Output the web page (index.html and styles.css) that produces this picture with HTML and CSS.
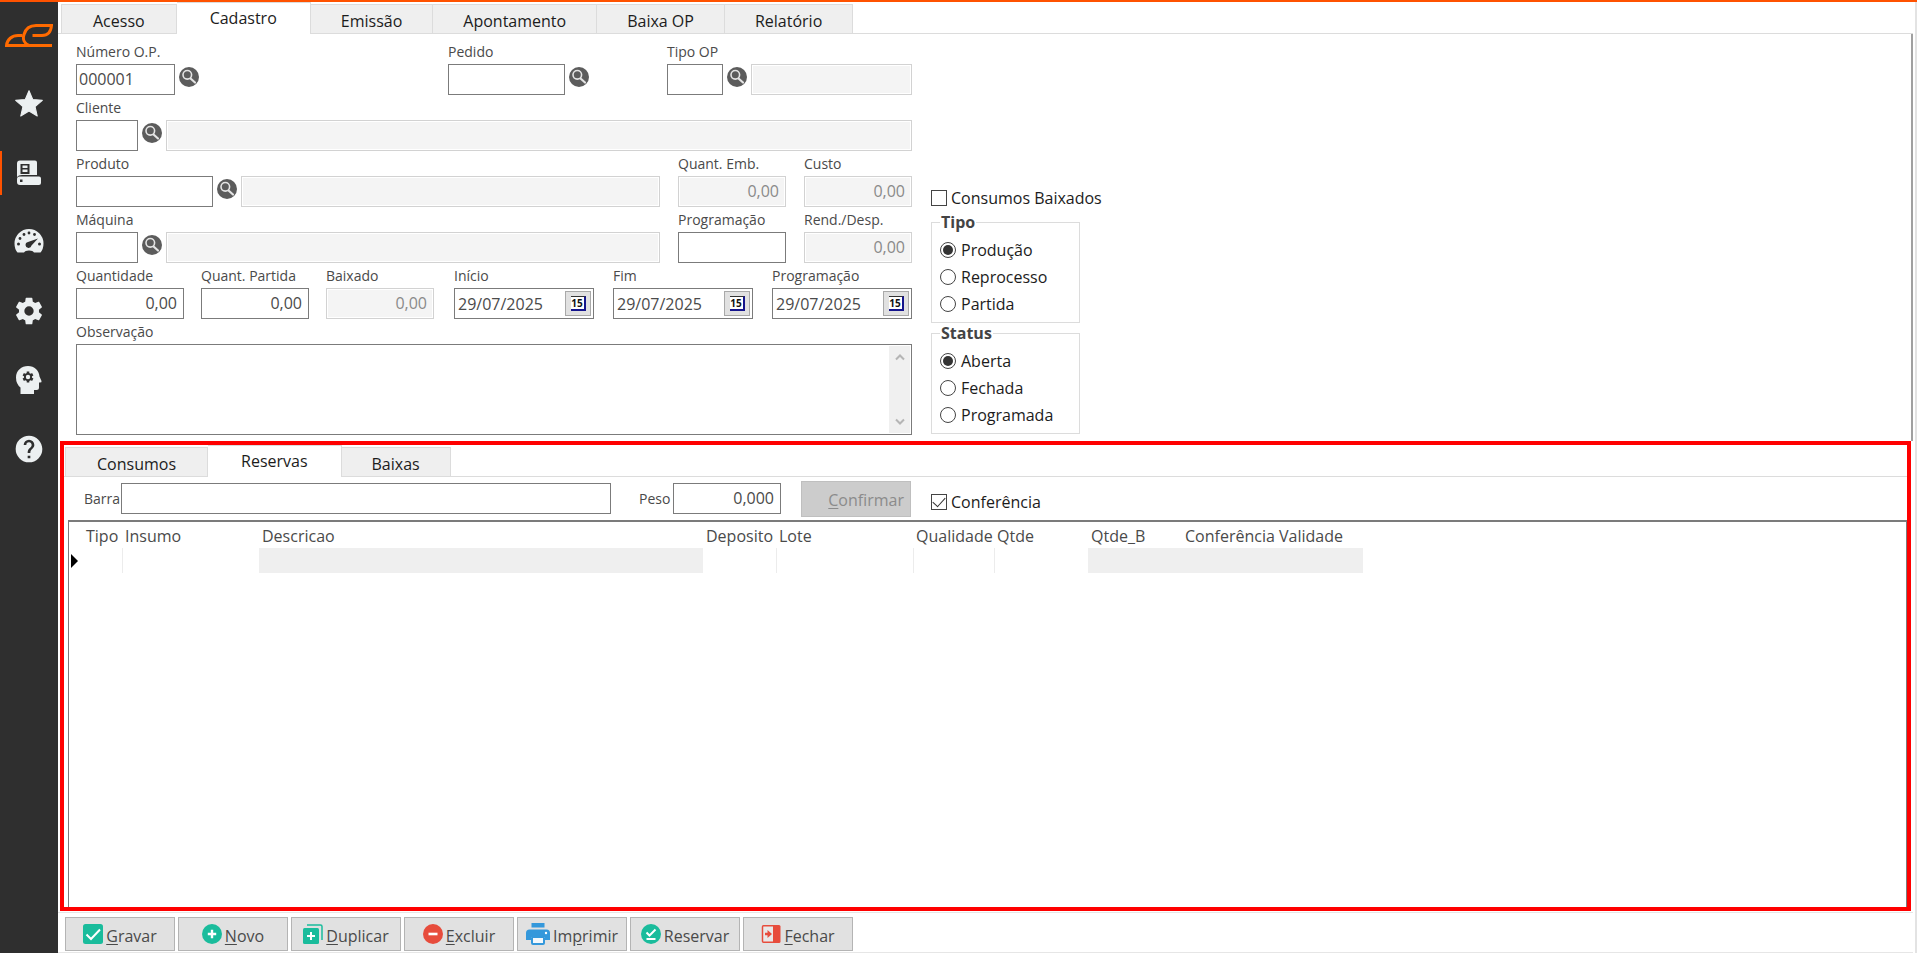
FILE: index.html
```html
<!DOCTYPE html>
<html lang="pt-BR">
<head>
<meta charset="utf-8">
<title>Ordem de Produção</title>
<link rel="stylesheet" href="styles.css">
</head>
<body>
<svg class="defs" aria-hidden="true">
  <symbol id="lens" viewBox="0 0 20 20">
    <circle cx="10" cy="10" r="10" fill="#5c5c5c"/>
    <path d="M11 11l5 4.500" stroke="#e4e4e4" stroke-width="2.2" stroke-linecap="round"/>
    <circle cx="8.300" cy="7.800" r="4.300" fill="#5c5c5c" stroke="#e4e4e4" stroke-width="1.600"/>
  </symbol>
</svg>

<nav class="sidebar" aria-label="Menu principal">
  <svg class="logo" viewBox="0 0 48 23" fill="none" stroke="#ff6a00" stroke-width="3">
    <path d="M47 21.500H1.500C2 15.500 7 11.500 13 11.500H17.500"/>
    <path d="M24 21.500C19 19.500 17.500 15 19 10.500C20.500 5 25 1.500 31 1.500H46.500C46 7.500 43 11.500 37 11.500H27.500"/>
  </svg>
  <button class="nav-item" aria-label="Favoritos"><svg viewBox="0 0 24 24"><path stroke="#ecf0f1" stroke-width=".8" stroke-linejoin="round" d="M12,17.27L18.18,21L16.54,13.97L22,9.24L14.81,8.62L12,2L9.19,8.62L2,9.24L7.45,13.97L5.82,21L12,17.27Z"/></svg></button>
  <button class="nav-item active" aria-label="Cadastros"><svg viewBox="0 0 32 32"><path fill-rule="evenodd" d="M7 3.500H22Q24 3.500 24 5.500V18H9Q5.500 18 4 20V6.500Q4 3.500 7 3.500ZM7.500 7V17H16.500V7ZM9.500 8.500H14.500V11H9.500ZM9.500 12.500H14.500V15H9.500Z"/><path fill-rule="evenodd" d="M6.500 19.500H26Q28 19.500 28 21.500V26Q28 28 26 28H7Q4 28 4 25V22Q4 19.500 6.500 19.500ZM7 22.500V25H9.500V22.500Z"/></svg></button>
  <button class="nav-item" aria-label="Indicadores"><svg viewBox="0 0 32 32"><path d="M4.500 26.500Q1.500 23 1.500 17.500A14.500 14.500 0 0 1 30.500 17.500Q30.500 23 27.500 26.500H21Q20 24.500 16 24.500T11 26.500Z"/><g fill="#2f2f2f"><circle cx="5.500" cy="18" r="1.500"/><circle cx="7" cy="12.500" r="1.400"/><circle cx="11" cy="8.500" r="1.400"/><circle cx="16" cy="7" r="1.400"/><circle cx="21.500" cy="8.500" r="1.400"/><circle cx="26.500" cy="18" r="1.500"/><path d="M25 12.500L18.500 19.500A3 3 0 1 1 15 16Z"/></g></svg></button>
  <button class="nav-item" aria-label="Configurações"><svg viewBox="0 0 24 24"><path d="M12,15.5A3.5,3.5 0 0,1 8.5,12A3.5,3.5 0 0,1 12,8.5A3.5,3.5 0 0,1 15.5,12A3.5,3.5 0 0,1 12,15.5M19.43,12.97C19.47,12.65 19.5,12.33 19.5,12C19.5,11.67 19.47,11.34 19.43,11L21.54,9.37C21.73,9.22 21.78,8.95 21.66,8.73L19.66,5.27C19.54,5.05 19.27,4.96 19.05,5.05L16.56,6.05C16.04,5.66 15.5,5.32 14.87,5.07L14.5,2.42C14.46,2.18 14.25,2 14,2H10C9.75,2 9.54,2.18 9.5,2.42L9.13,5.07C8.5,5.32 7.96,5.66 7.44,6.05L4.95,5.05C4.73,4.96 4.46,5.05 4.34,5.27L2.34,8.73C2.21,8.95 2.27,9.22 2.46,9.37L4.57,11C4.53,11.34 4.5,11.67 4.5,12C4.5,12.33 4.53,12.65 4.57,12.97L2.46,14.63C2.27,14.78 2.21,15.05 2.34,15.27L4.34,18.73C4.46,18.95 4.73,19.03 4.95,18.95L7.44,17.94C7.96,18.34 8.5,18.68 9.13,18.93L9.5,21.58C9.54,21.82 9.75,22 10,22H14C14.25,22 14.46,21.82 14.5,21.58L14.87,18.93C15.5,18.67 16.04,18.34 16.56,17.94L19.05,18.95C19.27,19.03 19.54,18.95 19.66,18.73L21.66,15.27C21.78,15.05 21.73,14.78 21.54,14.63L19.43,12.97Z"/></svg></button>
  <button class="nav-item" aria-label="Inteligência"><svg viewBox="0 0 32 32"><path d="M7.500 30V23.500Q3 20 3 13.500C3 6.500 8.500 2 15 2C21.500 2 26 6.500 26.500 12.500L28.500 17Q29 18.500 27 18.500H26V23.500Q26 26 23.500 26H21V30Z"/><g fill="#2f2f2f"><circle cx="15" cy="13" r="4"/><path d="M13.700 7.500H16.300V18.500H13.700ZM9.600 11.400L10.900 9.100L20.400 14.600L19.100 16.900ZM19.100 9.100L20.400 11.400L10.900 16.900L9.600 14.600Z"/></g><circle cx="15" cy="13" r="2.200"/></svg></button>
  <button class="nav-item" aria-label="Ajuda"><svg viewBox="0 0 24 24"><path d="M15.07,11.25L14.17,12.17C13.45,12.89 13,13.5 13,15H11V14.5C11,13.39 11.45,12.39 12.17,11.67L13.41,10.41C13.78,10.05 14,9.55 14,9C14,7.89 13.1,7 12,7A2,2 0 0,0 10,9H8A4,4 0 0,1 12,5A4,4 0 0,1 16,9C16,9.88 15.64,10.67 15.07,11.25M13,19H11V17H13M12,2A10,10 0 0,0 2,12A10,10 0 0,0 12,22A10,10 0 0,0 22,12C22,6.47 17.5,2 12,2Z"/></svg></button>
</nav>

<main class="main">
  <div class="tabs" role="tablist">
    <button class="tab" role="tab">Acesso</button>
    <button class="tab active" role="tab" aria-selected="true">Cadastro</button>
    <button class="tab" role="tab">Emissão</button>
    <button class="tab" role="tab">Apontamento</button>
    <button class="tab" role="tab">Baixa OP</button>
    <button class="tab" role="tab">Relatório</button>
  </div>

  <section class="order">
    <form class="form">
      <div class="row">
        <div class="field w-code"><label for="numero">Número O.P.</label>
          <div class="control"><input id="numero" value="000001"><button type="button" class="search" aria-label="Buscar O.P."><svg><use href="#lens"/></svg></button></div></div>
        <div class="field w-order push"><label for="pedido">Pedido</label>
          <div class="control"><input id="pedido"><button type="button" class="search" aria-label="Buscar pedido"><svg><use href="#lens"/></svg></button></div></div>
        <div class="field w-type"><label for="tipoop">Tipo OP</label>
          <div class="control"><input id="tipoop" class="in-type"><button type="button" class="search" aria-label="Buscar tipo"><svg><use href="#lens"/></svg></button><input class="grow" aria-label="Descrição do tipo" disabled></div></div>
      </div>
      <div class="row">
        <div class="field grow"><label for="cliente">Cliente</label>
          <div class="control"><input id="cliente" class="in-short"><button type="button" class="search" aria-label="Buscar cliente"><svg><use href="#lens"/></svg></button><input class="grow" aria-label="Nome do cliente" disabled></div></div>
      </div>
      <div class="row">
        <div class="field grow"><label for="produto">Produto</label>
          <div class="control"><input id="produto" class="in-product"><button type="button" class="search" aria-label="Buscar produto"><svg><use href="#lens"/></svg></button><input class="grow" aria-label="Nome do produto" disabled></div></div>
        <div class="field w-num"><label for="emb">Quant. Emb.</label><input id="emb" class="num" value="0,00" disabled></div>
        <div class="field w-num"><label for="custo">Custo</label><input id="custo" class="num" value="0,00" disabled></div>
      </div>
      <div class="row">
        <div class="field grow"><label for="maquina">Máquina</label>
          <div class="control"><input id="maquina" class="in-short"><button type="button" class="search" aria-label="Buscar máquina"><svg><use href="#lens"/></svg></button><input class="grow" aria-label="Nome da máquina" disabled></div></div>
        <div class="field w-num"><label for="prog">Programação</label><input id="prog"></div>
        <div class="field w-num"><label for="rend">Rend./Desp.</label><input id="rend" class="num" value="0,00" disabled></div>
      </div>
      <div class="row">
        <div class="amounts">
          <div class="field w-num"><label for="quant">Quantidade</label><input id="quant" class="num" value="0,00"></div>
          <div class="field w-num"><label for="partida">Quant. Partida</label><input id="partida" class="num" value="0,00"></div>
          <div class="field w-num"><label for="baixado">Baixado</label><input id="baixado" class="num" value="0,00" disabled></div>
        </div>
        <div class="dates">
          <div class="field w-date"><label for="inicio">Início</label>
            <div class="date"><input id="inicio" value="29/07/2025"><button type="button" aria-label="Calendário de início"><span class="cal">15</span></button></div></div>
          <div class="field w-date"><label for="fim">Fim</label>
            <div class="date"><input id="fim" value="29/07/2025"><button type="button" aria-label="Calendário de fim"><span class="cal">15</span></button></div></div>
          <div class="field w-date"><label for="progdata">Programação</label>
            <div class="date"><input id="progdata" value="29/07/2025"><button type="button" aria-label="Calendário de programação"><span class="cal">15</span></button></div></div>
        </div>
      </div>
      <div class="field"><label for="obs">Observação</label>
        <div class="memo"><textarea id="obs"></textarea>
          <div class="scroll" aria-hidden="true">
            <svg viewBox="0 0 10 8"><path d="M1 6.500L5 2.500L9 6.500"/></svg>
            <svg viewBox="0 0 10 8"><path d="M1 1.500L5 5.500L9 1.500"/></svg>
          </div></div></div>
    </form>

    <div class="options">
      <label class="check"><input type="checkbox"><span>Consumos Baixados</span></label>
      <div class="groups">
        <fieldset>
          <legend>Tipo</legend>
          <label class="check"><input type="radio" name="tipo" checked><span>Produção</span></label>
          <label class="check"><input type="radio" name="tipo"><span>Reprocesso</span></label>
          <label class="check"><input type="radio" name="tipo"><span>Partida</span></label>
        </fieldset>
        <fieldset>
          <legend>Status</legend>
          <label class="check"><input type="radio" name="status" checked><span>Aberta</span></label>
          <label class="check"><input type="radio" name="status"><span>Fechada</span></label>
          <label class="check"><input type="radio" name="status"><span>Programada</span></label>
        </fieldset>
      </div>
    </div>
  </section>

  <section class="reserves">
    <div class="tabs" role="tablist">
      <button class="tab" role="tab">Consumos</button>
      <button class="tab active" role="tab" aria-selected="true">Reservas</button>
      <button class="tab" role="tab">Baixas</button>
    </div>
    <div class="entry">
      <label for="barra" class="bar">Barra</label><input id="barra" class="in-bar">
      <label for="peso" class="weight">Peso</label><input id="peso" class="num in-weight" value="0,000">
      <button class="confirm" disabled><u>C</u>onfirmar</button>
      <label class="check"><input type="checkbox" checked><span>Conferência</span></label>
    </div>
    <div class="grid">
      <table>
        <colgroup><col class="c-mark"><col class="c-tipo"><col class="c-insumo"><col class="c-desc"><col class="c-dep"><col class="c-lote"><col class="c-qual"><col class="c-qtde"><col class="c-qtdeb"><col class="c-conf"><col class="c-val"></colgroup>
        <thead><tr><th></th><th>Tipo</th><th>Insumo</th><th>Descricao</th><th>Deposito</th><th>Lote</th><th>Qualidade</th><th>Qtde</th><th>Qtde_B</th><th>Conferência</th><th>Validade</th></tr></thead>
        <tbody><tr><td class="mark"><svg viewBox="0 0 7 14"><path d="M0 0L7 7L0 14Z"/></svg></td><td class="line"></td><td></td><td class="ro"></td><td class="line"></td><td class="line"></td><td class="line"></td><td></td><td class="ro"></td><td class="ro"></td><td class="ro"></td></tr></tbody>
      </table>
    </div>
  </section>

  <footer class="actions">
    <button><svg viewBox="0 0 20 20"><rect width="20" height="20" rx="2.500" fill="#1abc9c"/><path d="M3.500 10.500L8 15L17 5.500" fill="none" stroke="#fff" stroke-width="2"/></svg><span><u>G</u>ravar</span></button>
    <button><svg viewBox="0 0 20 20"><circle cx="10" cy="10" r="10" fill="#1abc9c"/><path d="M10 5.800V14.200M5.800 10H14.200" stroke="#fff" stroke-width="2.400"/></svg><span><u>N</u>ovo</span></button>
    <button><svg viewBox="0 0 20 20"><rect y="4" width="16" height="16" rx="1.500" fill="#1abc9c"/><path d="M4 1H17.500Q19 1 19 2.500V16" fill="none" stroke="#1abc9c" stroke-width="1.500"/><path d="M8 8V16M4 12H12" stroke="#fff" stroke-width="2"/></svg><span><u>D</u>uplicar</span></button>
    <button><svg viewBox="0 0 20 20"><circle cx="10" cy="10" r="10" fill="#e74c3c"/><path d="M5.500 10H14.500" stroke="#fff" stroke-width="2.600"/></svg><span><u>E</u>xcluir</span></button>
    <button><svg class="wide" viewBox="0 0 24 22"><path fill="#3498db" d="M5.500 0H18.500V4.500H5.500ZM3.500 6.500H20.500Q24 6.500 24 10V17H19V14H5V17H0V10Q0 6.500 3.500 6.500Z"/><circle cx="20" cy="10" r="1.200" fill="#fff"/><rect x="6" y="14" width="12" height="7" rx="1" fill="#f3f8fc" stroke="#3498db" stroke-width="2"/></svg><span>Im<u>p</u>rimir</span></button>
    <button><svg viewBox="0 0 20 20"><circle cx="10" cy="10" r="10" fill="#1abc9c"/><path d="M5.500 8.500L8.500 11.500L14.500 5.500M5.500 15H14.500" fill="none" stroke="#fff" stroke-width="2"/></svg><span>Reservar</span></button>
    <button><svg viewBox="0 0 20 20"><path d="M12 1.700H2.500Q1.500 1.700 1.500 2.700V17.300Q1.500 18.300 2.500 18.300H12" fill="#fff" fill-opacity=".25" stroke="#e74c3c" stroke-width="1.500"/><path d="M12 1H18Q19.500 1 19.500 2.500V17.500Q19.500 19 18 19H12Z" fill="#e74c3c"/><path d="M4 8.800H6.500V6L11 10L6.500 14V11.200H4Z" fill="#e74c3c"/></svg><span><u>F</u>echar</span></button>
  </footer>
</main>
</body>
</html>
```
FILE: styles.css
```css
* { box-sizing: border-box; }

body {
  margin: 0;
  min-height: 100vh;
  display: flex;
  border-top: 2px solid #ff5200;
  background: #fff;
  color: #1c1c1c;
  font: 16px/20px "Open Sans", "Noto Sans", sans-serif;
}

button, input, textarea { font: inherit; color: inherit; border-radius: 0; margin: 0; }
button { padding: 0; border: 0; background: none; }
.defs { position: absolute; width: 0; height: 0; }
.grow { flex: 1; min-width: 0; }

/* Sidebar */
.sidebar {
  flex: none;
  width: 58px;
  padding-top: 22px;
  display: flex;
  flex-direction: column;
  align-items: center;
  gap: 25px;
  background: #2f2f2f;
}
.logo { width: 48px; height: 23px; margin-bottom: 10px; }
.nav-item {
  width: 100%;
  height: 44px;
  display: flex;
  align-items: center;
  justify-content: center;
  border: solid transparent;
  border-width: 0 2px;
}
.nav-item.active { border-left-color: #ff5200; }
.nav-item svg { width: 32px; height: 32px; fill: #ecf0f1; }

/* Main column */
.main {
  flex: 1;
  min-width: 0;
  display: flex;
  flex-direction: column;
  padding-right: 2px;
  border-right: 2px solid #e3e3e3;
}

.tabs {
  display: flex;
  align-items: flex-end;
  height: 32px;
  padding-left: 3px;
  border-bottom: 1px solid #dcdcdc;
}
.tab {
  height: 29px;
  padding: 4px 30px 0;
  border: solid #dcdcdc;
  border-width: 1px 1px 0 0;
  background: #efefef;
}
.tab:first-child { padding: 4px 31px 0; border-left-width: 1px; }
.tab.active {
  height: 32px;
  margin-bottom: -1px;
  padding: 0 33px 1px;
  background: #fff;
}

/* Order form */
.order {
  display: flex;
  gap: 19px;
  padding: 5px 0 6px 18px;
  border-right: 2px solid #a0a0a0;
}
.form { width: 836px; color: #4a4a4a; }
.row { display: flex; justify-content: space-between; gap: 18px; }
.amounts { display: flex; gap: 17px; }
.dates { display: flex; gap: 19px; }
.field label { display: block; height: 25px; padding-top: 3px; font-size: 14px; }
.field input { display: block; width: 100%; }
.control { display: flex; gap: 4px; }

input {
  height: 31px;
  padding: 0 2px 1px;
  border: 1px solid #7b7b7b;
  background: #fff;
}
input:disabled {
  border-color: #d2d2d2;
  background: #f4f4f4;
  box-shadow: inset 0 0 0 1px #fff;
  color: #8a8a8a;
}
input.num { text-align: right; padding-right: 6px; }

.w-code { width: 123px; }
.w-order { width: 141px; }
.w-type { width: 245px; }
.w-num { width: 108px; }
.w-date { width: 140px; }
.push { margin-left: 171px; }
.field .in-type { width: 56px; }
.field .in-short { width: 62px; }
.field .in-product { width: 137px; }
.field .control .grow { width: auto; }

.search { flex: none; width: 20px; height: 26px; }
.search svg { display: block; width: 20px; height: 20px; }

.date { display: flex; height: 31px; padding: 2px; border: 1px solid #7b7b7b; }
.date input { flex: 1; min-width: 0; height: 25px; padding: 0 1px; border: 0; }
.date button {
  flex: none;
  width: 26px;
  border: 1px solid #a9a9a9;
  background: #e1e1e1;
  display: flex;
  align-items: center;
  justify-content: center;
}
.cal {
  width: 15px;
  height: 15px;
  border: solid #14148c;
  border-width: 1px 2px 2px 0;
  border-top-color: #333;
  background: #fff;
  color: #111;
  font: bold 10px/12px "Noto Sans", sans-serif;
  text-align: center;
}

.memo { display: flex; height: 91px; padding: 1px; border: 1px solid #7b7b7b; }
textarea { flex: 1; border: 0; resize: none; outline: 0; }
.scroll {
  width: 21px;
  padding: 7px 0;
  display: flex;
  flex-direction: column;
  justify-content: space-between;
  align-items: center;
  background: #f0f0f0;
}
.scroll svg { width: 10px; height: 8px; fill: none; stroke: #b5b5b5; stroke-width: 2; }

/* Options */
.options { width: 149px; padding-top: 148px; white-space: nowrap; }
.groups { padding-top: 3px; }
.check { display: flex; align-items: center; gap: 4px; height: 22px; }
.check input {
  appearance: none;
  flex: none;
  width: 16px;
  height: 16px;
  padding: 0;
  border: 1px solid #444;
  display: grid;
  place-content: center;
}
.check input[type="radio"] { border-radius: 50%; }
.check input[type="radio"]:checked::before {
  content: "";
  width: 10px;
  height: 10px;
  border-radius: 50%;
  background: #333;
}
.check input[type="checkbox"]:checked::before {
  content: "";
  width: 11px;
  height: 6px;
  margin-bottom: 3px;
  border: solid #333;
  border-width: 0 0 1px 1px;
  transform: rotate(-48deg);
}
fieldset {
  margin: 0;
  height: 111px;
  padding: 4px 0 0 8px;
  border: 1px solid #dcdcdc;
}
fieldset .check { height: 27px; gap: 5px; }
legend { padding: 0 1px; height: 20px; font-weight: bold; color: #444; }

/* Reserves */
.reserves {
  flex: 1;
  display: flex;
  flex-direction: column;
  margin: 0 2px;
  border: 4px solid #f00;
}
.reserves .tabs { padding-left: 1px; }
.entry { display: flex; align-items: center; height: 43px; padding-left: 20px; color: #4a4a4a; }
.entry label { font-size: 14px; }
.bar { width: 35px; }
.in-bar { width: 490px; margin-left: 2px; }
.weight { width: 32px; margin-left: 28px; }
.in-weight { width: 108px; margin-left: 2px; }
.confirm {
  width: 110px;
  height: 36px;
  margin: 0 20px;
  padding: 2px 6px 0 0;
  border: 1px solid #bfbfbf;
  background: #ccc;
  color: #8b8b8b;
  text-align: right;
}
.entry .check { height: 28px; padding-top: 6px; font-size: 16px; color: #1c1c1c; }

.grid {
  flex: 1;
  margin-left: 4px;
  border: solid #7b7b7b;
  border-width: 2px 1px 0 1px;
}
table { width: 1294px; table-layout: fixed; border-collapse: collapse; color: #4a4a4a; }
th { height: 26px; padding: 2px 0 0 3px; font-weight: normal; text-align: left; white-space: nowrap; }
td { height: 25px; padding: 0; }
td.line { border-right: 1px solid #ececec; }
td.ro { background: #efefef; }
.mark svg { display: block; width: 7px; height: 14px; margin-left: 2px; fill: #000; }
.c-mark { width: 14px; }
.c-tipo { width: 39px; }
.c-insumo { width: 137px; }
.c-desc { width: 444px; }
.c-dep { width: 73px; }
.c-lote { width: 137px; }
.c-qual { width: 81px; }
.c-qtde { width: 94px; }
.c-qtdeb, .c-conf { width: 94px; }
.c-val { width: 87px; }

/* Actions */
.actions {
  display: flex;
  gap: 3px;
  margin-top: 1px;
  padding: 4px 0 1px 7px;
  border: solid #e6e6e6;
  border-width: 1px 0;
}
.actions button {
  width: 110px;
  height: 34px;
  display: flex;
  align-items: center;
  justify-content: center;
  gap: 3px;
  border: 1px solid #b4b4b4;
  background: #e1e1e1;
  color: #4a4a4a;
}
.actions svg { width: 20px; height: 20px; }
.actions svg.wide { width: 24px; height: 22px; }
.actions span { padding-top: 4px; }
u { text-underline-offset: 2px; }
```
